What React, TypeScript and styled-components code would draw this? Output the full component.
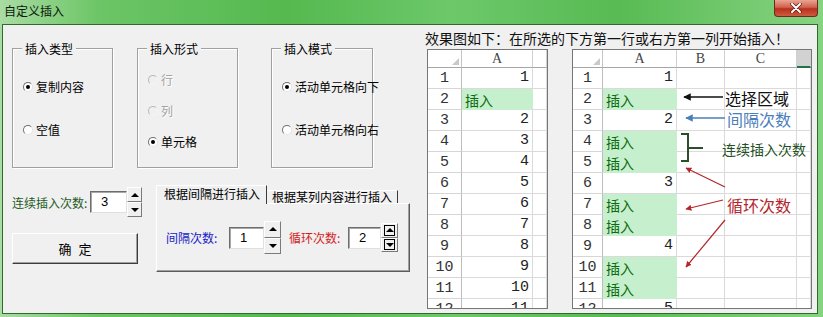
import styled, { createGlobalStyle } from 'styled-components';

const UI_FONT = '"Noto Sans CJK SC", "Liberation Sans", sans-serif';
const CELL_FONT = '"Liberation Mono", "Noto Sans CJK SC", monospace';

const GlobalStyle = createGlobalStyle`
  html, body { margin: 0; padding: 0; background: #fff; }
  body { font-family: ${UI_FONT}; font-size: 12px; color: #000; }
  * { box-sizing: border-box; }
`;

type Cell = { text: string; kind: 'num' | 'ins' | 'empty' };

const num = (n: number): Cell => ({ text: String(n), kind: 'num' });
const ins: Cell = { text: '插入', kind: 'ins' };
const empty: Cell = { text: '', kind: 'empty' };

const leftRows: Cell[][] = [
  [num(1), empty],
  [ins, empty],
  ...[2, 3, 4, 5, 6, 7, 8, 9, 10, 11].map(n => [num(n), empty]),
];

const rightA: Cell[] = [num(1), ins, num(2), ins, ins, num(3), ins, ins, num(4), ins, ins, num(5)];
const rightRows: Cell[][] = rightA.map(c => [c, empty, empty, empty]);

const Frame = styled.div`
  width: 823px;
  height: 317px;
  display: flex;
  flex-direction: column;
  padding: 0 5px 3px 2px;
  background: linear-gradient(90deg, #a9dca3 0%, #6cc566 12%, #55b94f 35%, #6dc86a 55%, #58bb53 75%, #86d381 100%);
`;

const TitleBar = styled.div`
  height: 24px;
  flex: none;
  display: flex;
  align-items: flex-start;
`;

const Title = styled.div`
  padding: 3px 0 0 2px;
  font-size: 12px;
  line-height: 16px;
  color: #0c1a0c;
`;

const CloseButton = styled.div`
  margin-left: auto;
  width: 44px;
  height: 17px;
  border: 1px solid #6b2a22;
  border-top: none;
  border-radius: 0 0 4px 4px;
  background: linear-gradient(180deg, #e9a493 0%, #d2634f 45%, #b8301c 55%, #d05a3f 100%);
  display: flex;
  align-items: center;
  justify-content: center;
`;

const Client = styled.div`
  flex: 1;
  display: flex;
  border: 1px solid #2f6b2c;
  background: #f0f0f0;
`;

const LeftPane = styled.div`
  width: 418px;
  flex: none;
  padding: 23px 0 0 9px;
`;

const GroupRow = styled.div`
  display: flex;
`;

const GroupBox = styled.div<{ $width: number; $gapBefore: number }>`
  width: ${p => p.$width}px;
  height: 120px;
  margin-left: ${p => p.$gapBefore}px;
  border: 1px solid #a0a0a0;
  box-shadow: inset 1px 1px 0 #fff, 1px 1px 0 #fff;
`;

const Legend = styled.div`
  width: fit-content;
  margin: -7px 0 0 9px;
  padding: 0 3px;
  line-height: 14px;
  background: #f0f0f0;
`;

const RadioList = styled.div<{ $padTop: number; $gap: number }>`
  display: flex;
  flex-direction: column;
  gap: ${p => p.$gap}px;
  padding: ${p => p.$padTop}px 0 0 10px;
`;

const RadioRow = styled.div<{ $disabled?: boolean }>`
  display: flex;
  align-items: center;
  gap: 3px;
  height: 14px;
  line-height: 14px;
  white-space: nowrap;
  color: ${p => (p.$disabled ? '#a3a3a3' : '#000')};
  text-shadow: ${p => (p.$disabled ? '1px 1px 0 #fff' : 'none')};
`;

const RadioDot = styled.span<{ $checked?: boolean; $disabled?: boolean }>`
  width: 10px;
  height: 10px;
  flex: none;
  border-radius: 50%;
  border: 1px solid;
  border-color: ${p => (p.$disabled ? '#b8b8b8 #f4f4f4 #f4f4f4 #b8b8b8' : '#6f6f6f #e4e4e4 #e4e4e4 #6f6f6f')};
  background: ${p => (p.$disabled ? '#f0f0f0' : '#fff')};
  display: flex;
  align-items: center;
  justify-content: center;
  &::after {
    content: '';
    width: 4px;
    height: 4px;
    border-radius: 50%;
    background: ${p => (p.$checked ? '#000' : 'transparent')};
  }
`;

const BottomRow = styled.div`
  display: flex;
  align-items: flex-start;
  margin-top: 17px;
`;

const LeftStack = styled.div`
  width: 126px;
  display: flex;
  flex-direction: column;
`;

const SpinRow = styled.div`
  display: flex;
  align-items: center;
  margin-top: 2px;
  height: 30px;
`;

const FieldLabel = styled.span<{ $color: string; $width: number; $gapBefore?: number }>`
  width: ${p => p.$width}px;
  margin-left: ${p => p.$gapBefore ?? 0}px;
  flex: none;
  color: ${p => p.$color};
  font-size: 12px;
  white-space: nowrap;
`;

const NumBox = styled.div<{ $width: number }>`
  width: ${p => p.$width}px;
  height: 22px;
  flex: none;
  padding-left: 10px;
  border: 1px solid;
  border-color: #6d6d6d #e0e0e0 #e0e0e0 #6d6d6d;
  box-shadow: inset 1px 1px 0 #a8a8a8;
  background: #fff;
  font-family: "Liberation Sans", sans-serif;
  font-size: 13px;
  line-height: 20px;
`;

const SpinColumn = styled.div<{ $width: number; $height: number }>`
  width: ${p => p.$width}px;
  height: ${p => p.$height}px;
  flex: none;
  display: flex;
  flex-direction: column;
`;

const SpinButton = styled.div<{ $down?: boolean; $boxed?: boolean }>`
  flex: 1;
  display: flex;
  align-items: center;
  justify-content: center;
  background: #f0f0f0;
  border: 1px solid;
  border-color: #fff #7a7a7a #7a7a7a #fff;
  & > span {
    display: flex;
    align-items: center;
    justify-content: center;
    width: ${p => (p.$boxed ? '11px' : 'auto')};
    height: ${p => (p.$boxed ? '11px' : 'auto')};
    border: ${p => (p.$boxed ? '1px solid #000' : 'none')};
  }
  & > span::after {
    content: '';
    border-left: 4px solid transparent;
    border-right: 4px solid transparent;
    ${p => (p.$down ? 'border-top: 4px solid #000;' : 'border-bottom: 4px solid #000;')}
  }
`;

const PushButton = styled.div`
  margin-top: 16px;
  height: 31px;
  display: flex;
  align-items: center;
  justify-content: center;
  border: 1px solid;
  border-color: #fff #3c3c3c #3c3c3c #fff;
  box-shadow: inset -1px -1px 0 #a0a0a0;
  font-size: 13px;
  word-spacing: 4px;
`;

const TabControl = styled.div`
  width: 254px;
  margin-left: 18px;
`;

const TabStrip = styled.div`
  display: flex;
  align-items: flex-end;
  height: 18px;
`;

const Tab = styled.div<{ $active?: boolean; $width: number }>`
  width: ${p => p.$width}px;
  height: ${p => (p.$active ? 19 : 13)}px;
  margin-bottom: ${p => (p.$active ? -1 : 0)}px;
  padding-left: ${p => (p.$active ? 7 : 4)}px;
  position: relative;
  z-index: ${p => (p.$active ? 1 : 0)};
  background: #f0f0f0;
  border: 1px solid;
  border-bottom: none;
  border-color: #fff #3c3c3c transparent ${p => (p.$active ? '#fff' : 'transparent')};
  font-size: 12px;
  line-height: ${p => (p.$active ? 16 : 12)}px;
  white-space: nowrap;
`;

const TabPanel = styled.div`
  height: 69px;
  display: flex;
  align-items: center;
  padding-left: 9px;
  border: 1px solid;
  border-color: #fff #5c5c5c #5c5c5c #fff;
  box-shadow: inset -1px -1px 0 #a0a0a0;
`;

const RightPane = styled.div`
  flex: 1;
  padding: 3px 0 0 4px;
`;

const Caption = styled.div`
  height: 20px;
  font-size: 14px;
  line-height: 20px;
  color: #111;
  white-space: nowrap;
`;

const SheetRow = styled.div`
  display: flex;
  gap: 24px;
  margin: 1px 0 0 2px;
`;

const Sheet = styled.div<{ $cols: string; $width: number }>`
  position: relative;
  width: ${p => p.$width}px;
  height: 260px;
  border: 1px solid #767676;
  background: #fff;
  overflow: hidden;
  display: grid;
  grid-template-columns: ${p => p.$cols};
  grid-template-rows: 18px;
  grid-auto-rows: 21px;
  align-content: start;
`;

const Corner = styled.div`
  border-right: 1px solid #c4c4c4;
  border-bottom: 1px solid #a6a6a6;
  display: flex;
  align-items: flex-end;
  justify-content: flex-end;
  padding: 0 2px 2px 0;
  &::after {
    content: '';
    border-left: 7px solid transparent;
    border-bottom: 7px solid #c9c9c9;
  }
`;

const ColHead = styled.div<{ $selected?: boolean }>`
  border-right: 1px solid #d0d0d0;
  border-bottom: ${p => (p.$selected ? '2px solid #217346' : '1px solid #a6a6a6')};
  background: ${p => (p.$selected ? '#d2d2d2' : '#fff')};
  font-family: "Liberation Serif", serif;
  font-size: 14px;
  line-height: 17px;
  color: #444;
  text-align: center;
`;

const RowHead = styled.div`
  border-right: 1px solid #bdbdbd;
  border-bottom: 1px solid #d6d6d6;
  font-family: ${CELL_FONT};
  font-size: 15px;
  line-height: 22px;
  color: #333;
  text-align: center;
`;

const DataCell = styled.div<{ $kind: Cell['kind'] }>`
  border-right: 1px solid ${p => (p.$kind === 'ins' ? '#c6efce' : '#dadada')};
  border-bottom: 1px solid ${p => (p.$kind === 'ins' ? '#c6efce' : '#dadada')};
  background: ${p => (p.$kind === 'ins' ? '#c6efce' : '#fff')};
  color: ${p => (p.$kind === 'ins' ? '#0b6a0b' : '#222')};
  font-family: ${p => (p.$kind === 'ins' ? UI_FONT : CELL_FONT)};
  font-size: ${p => (p.$kind === 'ins' ? 14 : 15)}px;
  line-height: ${p => (p.$kind === 'ins' ? 22 : 20)}px;
  text-align: ${p => (p.$kind === 'num' ? 'right' : 'left')};
  padding: 0 3px;
  white-space: nowrap;
`;

const Overlay = styled.div`
  position: absolute;
  inset: 0;
  pointer-events: none;
`;

const Note = styled.span<{ $x: number; $y: number; $color: string; $size: number }>`
  position: absolute;
  left: ${p => p.$x}px;
  top: ${p => p.$y}px;
  color: ${p => p.$color};
  font-size: ${p => p.$size}px;
  line-height: 18px;
  white-space: nowrap;
`;

function Radio({ label, checked, disabled }: { label: string; checked?: boolean; disabled?: boolean }) {
  return (
    <RadioRow $disabled={disabled}>
      <RadioDot $checked={checked} $disabled={disabled} />
      {label}
    </RadioRow>
  );
}

function Spinner({ width, height, boxed }: { width: number; height: number; boxed?: boolean }) {
  return (
    <SpinColumn $width={width} $height={height}>
      <SpinButton $boxed={boxed}>
        <span />
      </SpinButton>
      <SpinButton $boxed={boxed} $down>
        <span />
      </SpinButton>
    </SpinColumn>
  );
}

function SheetView({
  cols,
  width,
  heads,
  rows,
  selectedHead,
  children,
}: {
  cols: string;
  width: number;
  heads: string[];
  rows: Cell[][];
  selectedHead?: number;
  children?: React.ReactNode;
}) {
  return (
    <Sheet $cols={cols} $width={width}>
      <Corner />
      {heads.map((h, i) => (
        <ColHead key={i} $selected={i === selectedHead}>
          {h}
        </ColHead>
      ))}
      {rows.map((row, r) => [
        <RowHead key={`h${r}`}>{r + 1}</RowHead>,
        ...row.map((c, i) => (
          <DataCell key={`${r}-${i}`} $kind={c.kind}>
            {c.text}
          </DataCell>
        )),
      ])}
      {children}
    </Sheet>
  );
}

export default function App() {
  return (
    <>
      <GlobalStyle />
      <Frame>
        <TitleBar>
          <Title>自定义插入</Title>
          <CloseButton>
            <svg width="12" height="10" viewBox="0 0 12 10">
              <path d="M2 1 L10 9 M10 1 L2 9" stroke="#5a1a10" strokeWidth="3.4" strokeLinecap="round" />
              <path d="M2 1 L10 9 M10 1 L2 9" stroke="#fff" strokeWidth="2" strokeLinecap="round" />
            </svg>
          </CloseButton>
        </TitleBar>
        <Client>
          <LeftPane>
            <GroupRow>
              <GroupBox $width={101} $gapBefore={0}>
                <Legend>插入类型</Legend>
                <RadioList $padTop={24} $gap={29}>
                  <Radio label="复制内容" checked />
                  <Radio label="空值" />
                </RadioList>
              </GroupBox>
              <GroupBox $width={101} $gapBefore={24}>
                <Legend>插入形式</Legend>
                <RadioList $padTop={17} $gap={17}>
                  <Radio label="行" disabled />
                  <Radio label="列" disabled />
                  <Radio label="单元格" checked />
                </RadioList>
              </GroupBox>
              <GroupBox $width={102} $gapBefore={33}>
                <Legend>插入模式</Legend>
                <RadioList $padTop={24} $gap={29}>
                  <Radio label="活动单元格向下" checked />
                  <Radio label="活动单元格向右" />
                </RadioList>
              </GroupBox>
            </GroupRow>
            <BottomRow>
              <LeftStack>
                <SpinRow>
                  <FieldLabel $color="#1f5a1f" $width={78}>
                    连续插入次数:
                  </FieldLabel>
                  <NumBox $width={37}>3</NumBox>
                  <Spinner width={15} height={30} />
                </SpinRow>
                <PushButton>确 定</PushButton>
              </LeftStack>
              <TabControl>
                <TabStrip>
                  <Tab $active $width={111}>
                    根据间隔进行插入
                  </Tab>
                  <Tab $width={131}>根据某列内容进行插入</Tab>
                </TabStrip>
                <TabPanel>
                  <FieldLabel $color="#1a1ac8" $width={63}>
                    间隔次数:
                  </FieldLabel>
                  <NumBox $width={35}>1</NumBox>
                  <Spinner width={17} height={33} />
                  <FieldLabel $color="#d21e1e" $width={59} $gapBefore={8}>
                    循环次数:
                  </FieldLabel>
                  <NumBox $width={33}>2</NumBox>
                  <Spinner width={17} height={29} boxed />
                </TabPanel>
              </TabControl>
            </BottomRow>
          </LeftPane>
          <RightPane>
            <Caption>效果图如下：在所选的下方第一行或右方第一列开始插入！</Caption>
            <SheetRow>
              <SheetView cols="34px 71px 1fr" width={121} heads={['A', '']} rows={leftRows} />
              <SheetView
                cols="30px 74px 48px 72px 1fr"
                width={240}
                heads={['A', 'B', 'C', '']}
                rows={rightRows}
                selectedHead={3}
              >
                <Overlay>
                  <svg width="238" height="258" viewBox="0 0 238 258">
                    <defs>
                      <marker id="hBlack" viewBox="0 0 10 10" refX="9" refY="5" markerWidth="5" markerHeight="5" orient="auto">
                        <path d="M0 0 L10 5 L0 10 z" fill="#111" />
                      </marker>
                      <marker id="hBlue" viewBox="0 0 10 10" refX="9" refY="5" markerWidth="5" markerHeight="5" orient="auto">
                        <path d="M0 0 L10 5 L0 10 z" fill="#4a7ebb" />
                      </marker>
                      <marker id="hRed" viewBox="0 0 10 10" refX="9" refY="5" markerWidth="5" markerHeight="5" orient="auto">
                        <path d="M0 0 L10 5 L0 10 z" fill="#b3262b" />
                      </marker>
                    </defs>
                    <line x1="150" y1="47" x2="111" y2="47" stroke="#111" strokeWidth="1.5" markerEnd="url(#hBlack)" />
                    <line x1="152" y1="68" x2="113" y2="68" stroke="#4a7ebb" strokeWidth="1.5" markerEnd="url(#hBlue)" />
                    <path d="M108 84 H115 V111 H108 M115 98 H130" fill="none" stroke="#2b4f2b" strokeWidth="2" />
                    <line x1="152" y1="137" x2="113" y2="118" stroke="#b3262b" strokeWidth="1.2" markerEnd="url(#hRed)" />
                    <line x1="150" y1="150" x2="113" y2="159" stroke="#b3262b" strokeWidth="1.2" markerEnd="url(#hRed)" />
                    <line x1="152" y1="170" x2="113" y2="217" stroke="#b3262b" strokeWidth="1.2" markerEnd="url(#hRed)" />
                  </svg>
                  <Note $x={152} $y={39} $color="#111" $size={16}>
                    选择区域
                  </Note>
                  <Note $x={154} $y={60} $color="#4a7ebb" $size={16}>
                    间隔次数
                  </Note>
                  <Note $x={149} $y={90} $color="#234f23" $size={14}>
                    连续插入次数
                  </Note>
                  <Note $x={154} $y={146} $color="#b3262b" $size={16}>
                    循环次数
                  </Note>
                </Overlay>
              </SheetView>
            </SheetRow>
          </RightPane>
        </Client>
      </Frame>
    </>
  );
}
